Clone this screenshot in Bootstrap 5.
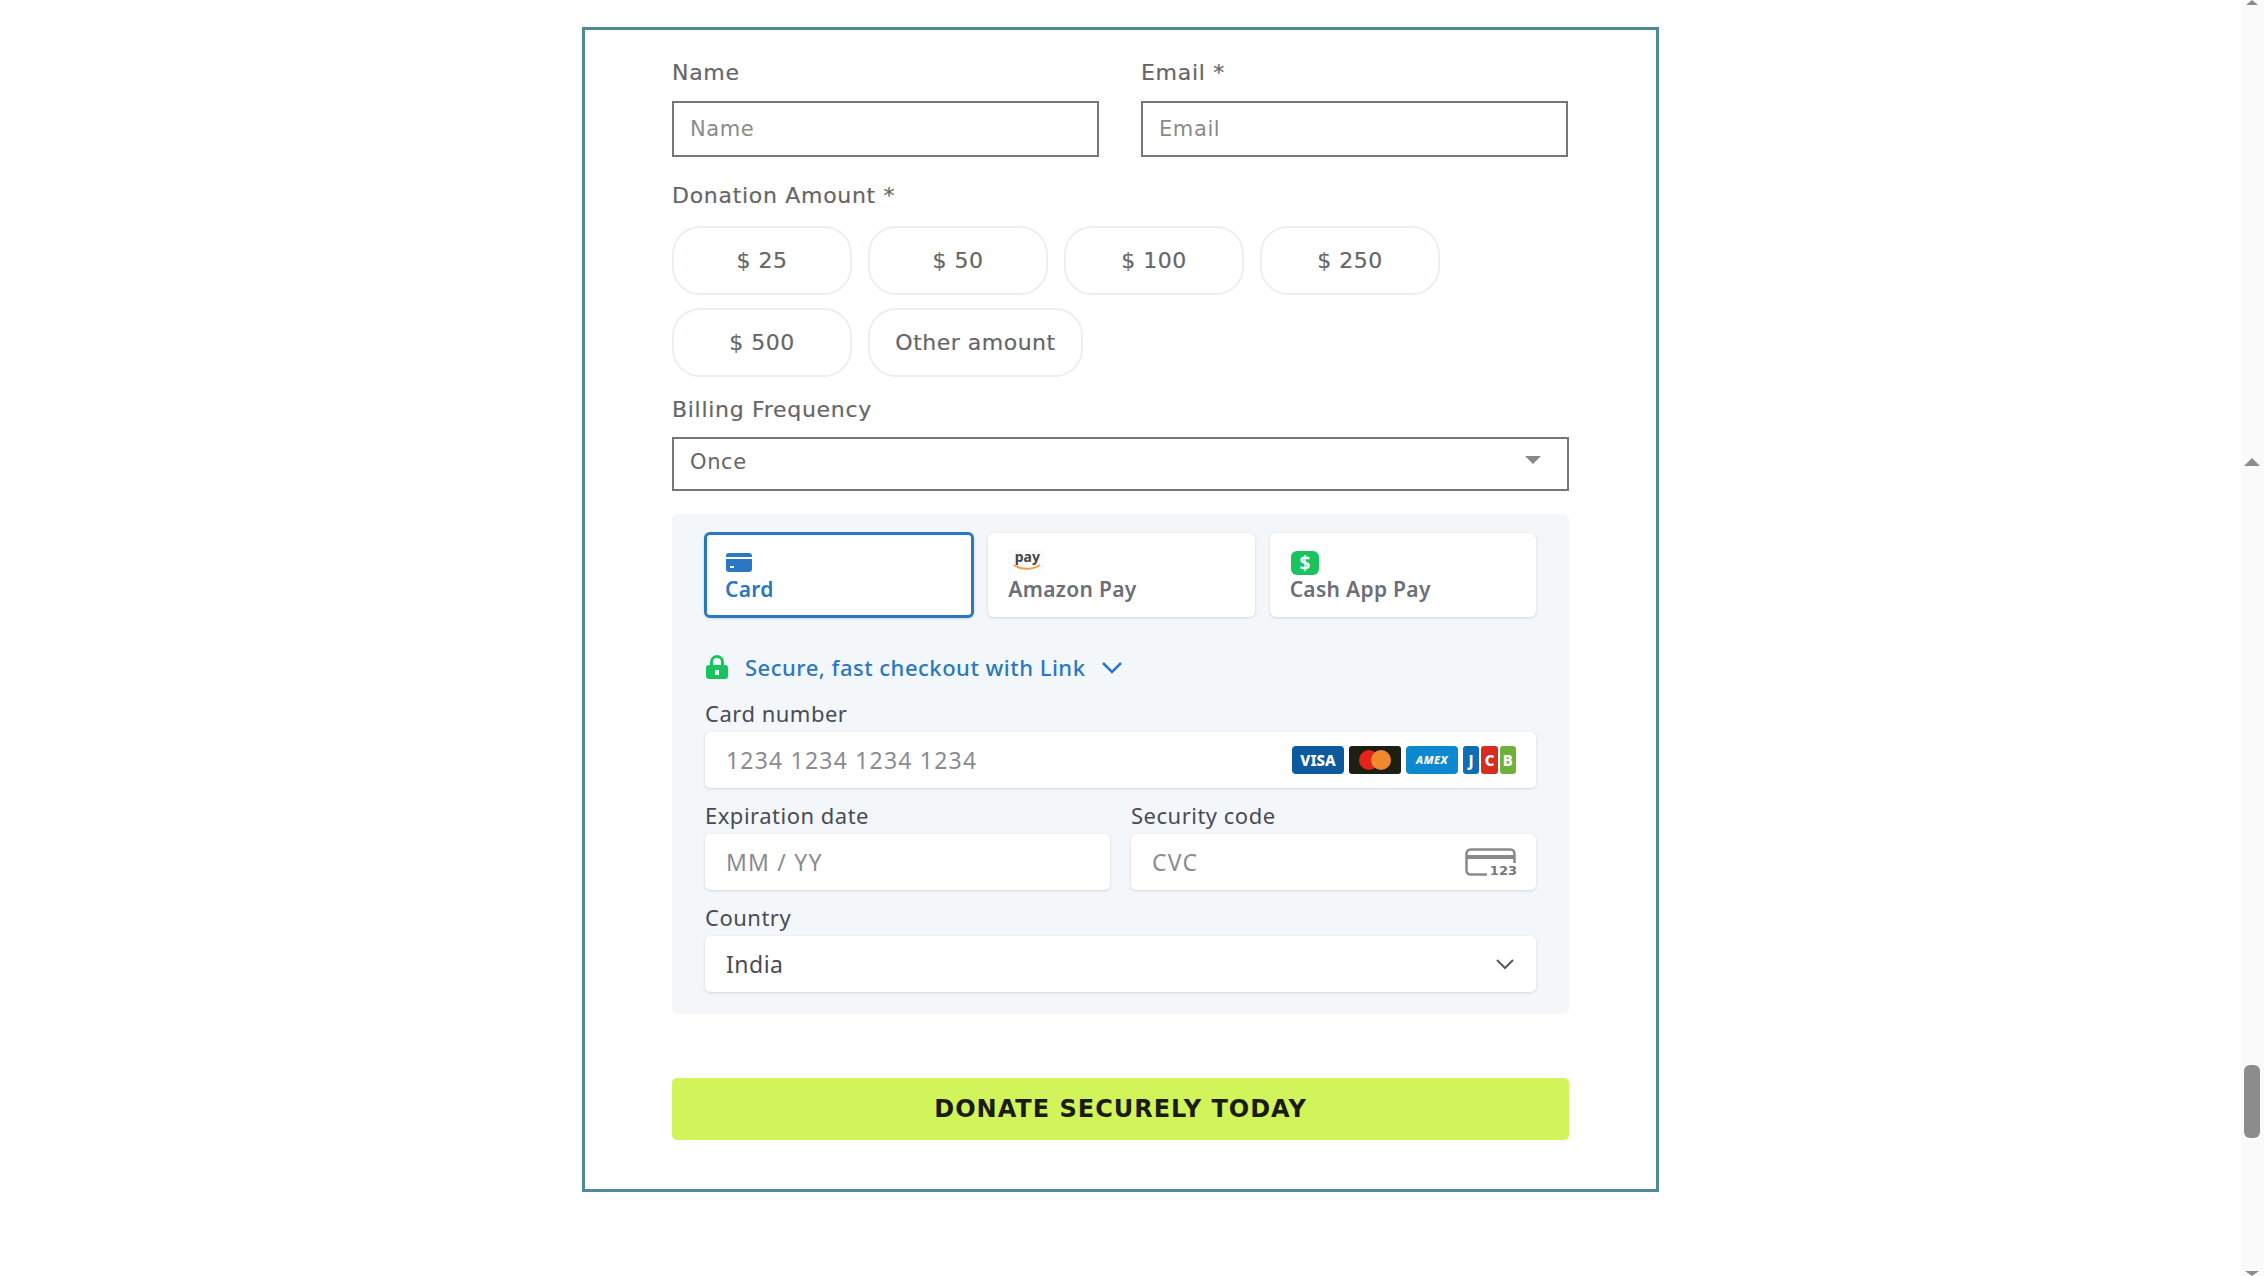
<!DOCTYPE html>
<html lang="en">
<head>
  <meta charset="UTF-8" />
  <meta name="viewport" content="width=device-width, initial-scale=1.0"/>
  <title>Donate</title>
  <link rel="stylesheet" href="https://cdn.jsdelivr.net/npm/bootstrap@5.3.0/dist/css/bootstrap.min.css" />
  <style>
    html, body { height: 100%; overflow: hidden; }
    body { background: #fff; font-family: "DejaVu Sans", "Liberation Sans", sans-serif; color: #555; }
    .page-main { padding-top: 27px; }
    .donate-box { width: 1077px; height: 1165px; border: 3px solid #4d8b96; padding: 28px 87px 0; }
    .field-label { font-size: 22px; line-height: 30px; letter-spacing: .7px; -webkit-text-stroke: .2px; color: #666; margin-bottom: 13px; display: block; }
    .field-label.amount-label { margin-bottom: 15px; }
    .field-label.billing-label { margin-bottom: 12px; }
    .name-row { gap: 42px; margin-bottom: 24px; }
    .name-row > div { width: 427px; }
    .box-input { height: 56px; border: 2px solid #777; border-radius: 0; font-size: 21px; letter-spacing: .6px; padding: 0 16px; color: #666; }
    .box-input::placeholder { color: #8a8a8a; }
    .amount-wrap { gap: 13px 16px; margin-bottom: 18px; }
    .amount-btn { width: 180px; height: 69px; border: 2px solid #eceff1; border-radius: 28px; background: #fff; font-size: 22px; letter-spacing: .5px; -webkit-text-stroke: .2px; color: #666; padding: 0; }
    .amount-btn.other-amt { width: 215px; }
    .billing-select { height: 54px; border: 2px solid #777; border-radius: 0; font-size: 21px; letter-spacing: .6px; padding: 0 16px 2px; color: #666; background-position: right 24px top 15px; background-size: 20px 12px;
      background-image: url("data:image/svg+xml,%3Csvg xmlns='http://www.w3.org/2000/svg' viewBox='0 0 20 12'%3E%3Cpath fill='%23888' d='M2 2h16l-8 8z'/%3E%3C/svg%3E"); }
    .pay-panel { background: #f3f7fa; border-radius: 6px; margin-top: 23px; padding: 19px 33px 20px; height: 500px; font-family: "Noto Sans", sans-serif; }
    .pay-tabs { gap: 15px; margin-bottom: 38px; }
    .pay-tab { width: 267px; height: 84px; background: #fff; border-radius: 6px; box-shadow: 0 1px 3px rgba(0,0,0,.12), 0 0 1px rgba(0,0,0,.08); padding: 17px 20px 0; font-size: 21px; font-weight: 600; letter-spacing: .3px; line-height: 26px; color: #6d6e78; }
    .pay-tab.is-active { border: 3px solid #2a77c4; color: #2a77c4; padding: 15px 18px 0; width: 271px; height: 86px; margin: -1px; }
    .tab-icon { height: 28px; display: block; margin-bottom: -2px; }
    .amazon-mark { display: block; width: 38px; height: 24px; text-align: center; background: #fbfcfc; color: #444; font-size: 14px; font-weight: 700; line-height: 14px; letter-spacing: 0; }
    .link-row { gap: 16px; height: 24px; font-size: 22px; letter-spacing: .5px; font-weight: 500; color: #2a77c4; margin-bottom: 20px; }
    .stripe-label { font-size: 22px; letter-spacing: .5px; line-height: 28px; color: #4a4b55; margin-bottom: 5px; display: block; }
    .stripe-input { height: 56px; background: #fff; border-radius: 5px; box-shadow: 0 1px 3px rgba(0,0,0,.12), 0 0 1px rgba(0,0,0,.08); padding: 0 21px; font-size: 23px; letter-spacing: 1.200px; color: #8a8b93; }
    .stripe-input.has-value { color: #4a4b55; letter-spacing: .5px; }
    .card-row { gap: 21px; margin-top: 13px; }
    .card-row > div { width: 405px; }
    .country-wrap { margin-top: 13px; }
    .brand-list { gap: 5px; margin-right: -1px; letter-spacing: 0; }
    .brand-visa, .brand-amex { width: 52px; height: 28px; border-radius: 4px; color: #fff; font-weight: 800; text-align: center; }
    .brand-visa { background: #0e5a9e; font-size: 15px; line-height: 28px; }
    .brand-amex { background: #0e88cf; font-size: 11px; line-height: 28px; font-style: italic; letter-spacing: .5px; }
    .brand-mc { width: 52px; height: 28px; border-radius: 3px; background: #1c1f14; }
    .brand-jcb { gap: 2px; width: 53px; height: 28px; }
    .jcb-part { flex: 1; border-radius: 3px; color: #fff; font-size: 15px; font-weight: 800; line-height: 28px; text-align: center; }
    .jcb-j { background: #0e6db3; }
    .jcb-c { background: #d92b22; }
    .jcb-b { background: #6fb03f; }
    .cvc-icon { position: relative; width: 51px; height: 28px; margin-right: -1px; letter-spacing: 0; }
    .cvc-num { position: absolute; right: -1px; bottom: -3px; padding: 0 0 0 3px; background: #fff; font-family: "DejaVu Sans", sans-serif; font-size: 13px; font-weight: 700; line-height: 16px; color: #777; }
    .donate-btn { height: 62px; margin-top: 64px; background: #d1f45a; border: 0; border-radius: 5px; color: #1a1c10; font-size: 24px; letter-spacing: 1px; font-weight: 700; padding: 0; }
    .donate-btn:hover { background: #c6ea4e; color: #1a1c10; }
    .scroll-rail { position: relative; width: 23px; background: #fafafa; flex-shrink: 0; }
    .scroll-thumb { position: absolute; left: 3px; top: 1065px; width: 16px; height: 73px; background: #8c8c8c; border-radius: 6px; }
    .scroll-arrow { position: absolute; left: 3px; }
  </style>
</head>
<body>
  <div class="d-flex h-100">
    <div class="page-main flex-grow-1 d-flex justify-content-center">
      <form class="donate-box">
        <!-- NAME + EMAIL -->
        <div class="d-flex name-row">
          <div>
            <label class="field-label" for="donor-name">Name</label>
            <input id="donor-name" type="text" class="form-control box-input" placeholder="Name" />
          </div>
          <div>
            <label class="field-label" for="donor-email">Email *</label>
            <input id="donor-email" type="email" class="form-control box-input" placeholder="Email" />
          </div>
        </div>
        <!-- AMOUNT -->
        <span class="field-label amount-label">Donation Amount *</span>
        <div class="d-flex flex-wrap amount-wrap">
          <button type="button" class="btn amount-btn">$ 25</button>
          <button type="button" class="btn amount-btn">$ 50</button>
          <button type="button" class="btn amount-btn">$ 100</button>
          <button type="button" class="btn amount-btn">$ 250</button>
          <div class="w-100 d-flex gap-3">
            <button type="button" class="btn amount-btn">$ 500</button>
            <button type="button" class="btn amount-btn other-amt">Other amount</button>
          </div>
        </div>
        <!-- FREQUENCY -->
        <label class="field-label billing-label" for="billing-freq">Billing Frequency</label>
        <select id="billing-freq" class="form-select billing-select"><option>Once</option></select>
        <!-- STRIPE PANEL -->
        <div class="pay-panel">
          <div class="d-flex pay-tabs">
            <div class="pay-tab is-active">
              <svg class="tab-icon" width="28" height="28" viewBox="0 0 28 28"><path fill="#2a77c4" d="M4 3h20a3 3 0 0 1 3 3v1H1V6a3 3 0 0 1 3-3zM1 9h26v10a3 3 0 0 1-3 3H4a3 3 0 0 1-3-3z"/><rect x="5" y="16" width="4" height="2" fill="#fff"/></svg>
              Card
            </div>
            <div class="pay-tab">
              <span class="tab-icon"><span class="amazon-mark">pay
                <svg class="d-block mx-auto" width="30" height="6" viewBox="0 0 30 6"><path d="M2 1c7 5 18 5 26 0" fill="none" stroke="#f0a14a" stroke-width="2"/></svg></span></span>
              Amazon Pay
            </div>
            <div class="pay-tab">
              <svg class="tab-icon" width="30" height="28" viewBox="0 0 30 28"><rect x="1" y="1" width="28" height="24" rx="6" fill="#19c45f"/><text x="15" y="20" text-anchor="middle" font-family="Noto Sans" font-size="19" font-weight="700" fill="#fff">$</text></svg>
              Cash App Pay
            </div>
          </div>
          <div class="d-flex align-items-center link-row">
            <svg width="24" height="24" viewBox="0 0 24 24"><path d="M6.500 11V7a5.500 5.500 0 0 1 11 0v4" fill="none" stroke="#19c45f" stroke-width="3"/><rect x="1" y="10" width="22" height="14" rx="3" fill="#19c45f"/><rect x="10" y="15" width="4" height="5" fill="#fff"/></svg>
            <span>Secure, fast checkout with Link</span>
            <svg width="22" height="13" viewBox="0 0 22 13"><path d="M2 2l9 9 9-9" fill="none" stroke="#2a77c4" stroke-width="2.500"/></svg>
          </div>
          <span class="stripe-label">Card number</span>
          <div class="stripe-input d-flex align-items-center justify-content-between">
            <span>1234 1234 1234 1234</span>
            <div class="d-flex brand-list">
              <div class="brand-visa">VISA</div>
              <svg class="brand-mc" viewBox="0 0 52 28"><circle cx="20" cy="14" r="10" fill="#e3241b"/><circle cx="32" cy="14" r="10" fill="#f0892b"/></svg>
              <div class="brand-amex">AMEX</div>
              <div class="d-flex brand-jcb">
                <div class="jcb-part jcb-j">J</div>
                <div class="jcb-part jcb-c">C</div>
                <div class="jcb-part jcb-b">B</div>
              </div>
            </div>
          </div>
          <div class="d-flex card-row">
            <div>
              <span class="stripe-label">Expiration date</span>
              <div class="stripe-input d-flex align-items-center">MM / YY</div>
            </div>
            <div>
              <span class="stripe-label">Security code</span>
              <div class="stripe-input d-flex align-items-center justify-content-between">
                <span>CVC</span>
                <div class="cvc-icon">
                  <svg class="d-block" width="51" height="28" viewBox="0 0 51 28"><rect x="1.500" y="1.500" width="48" height="25" rx="4" fill="none" stroke="#8a8a8a" stroke-width="2.500"/><rect x="2" y="7" width="47" height="4" fill="#8a8a8a"/></svg>
                  <span class="cvc-num">123</span>
                </div>
              </div>
            </div>
          </div>
          <div class="country-wrap">
            <span class="stripe-label">Country</span>
            <div class="stripe-input has-value d-flex align-items-center justify-content-between">
              <span>India</span>
              <svg width="20" height="12" viewBox="0 0 20 12"><path d="M2 2l8 8 8-8" fill="none" stroke="#5a5a5a" stroke-width="2"/></svg>
            </div>
          </div>
        </div>
        <button type="button" class="btn donate-btn w-100">DONATE SECURELY TODAY</button>
      </form>
    </div>
    <!-- scrollbars -->
    <div class="scroll-rail">
      <svg class="scroll-arrow" style="top:0" width="16" height="6" viewBox="0 0 16 6"><path fill="#8c8c8c" d="M2 5h12L8 0z"/></svg>
      <svg class="scroll-arrow" style="top:458px" width="16" height="8" viewBox="0 0 16 8"><path fill="#8c8c8c" d="M0 8h16L8 0z"/></svg>
      <div class="scroll-thumb"></div>
      <svg class="scroll-arrow" style="top:1271px" width="16" height="5" viewBox="0 0 16 5"><path fill="#8c8c8c" d="M1 0h14L8 5z"/></svg>
    </div>
  </div>
</body>
</html>
